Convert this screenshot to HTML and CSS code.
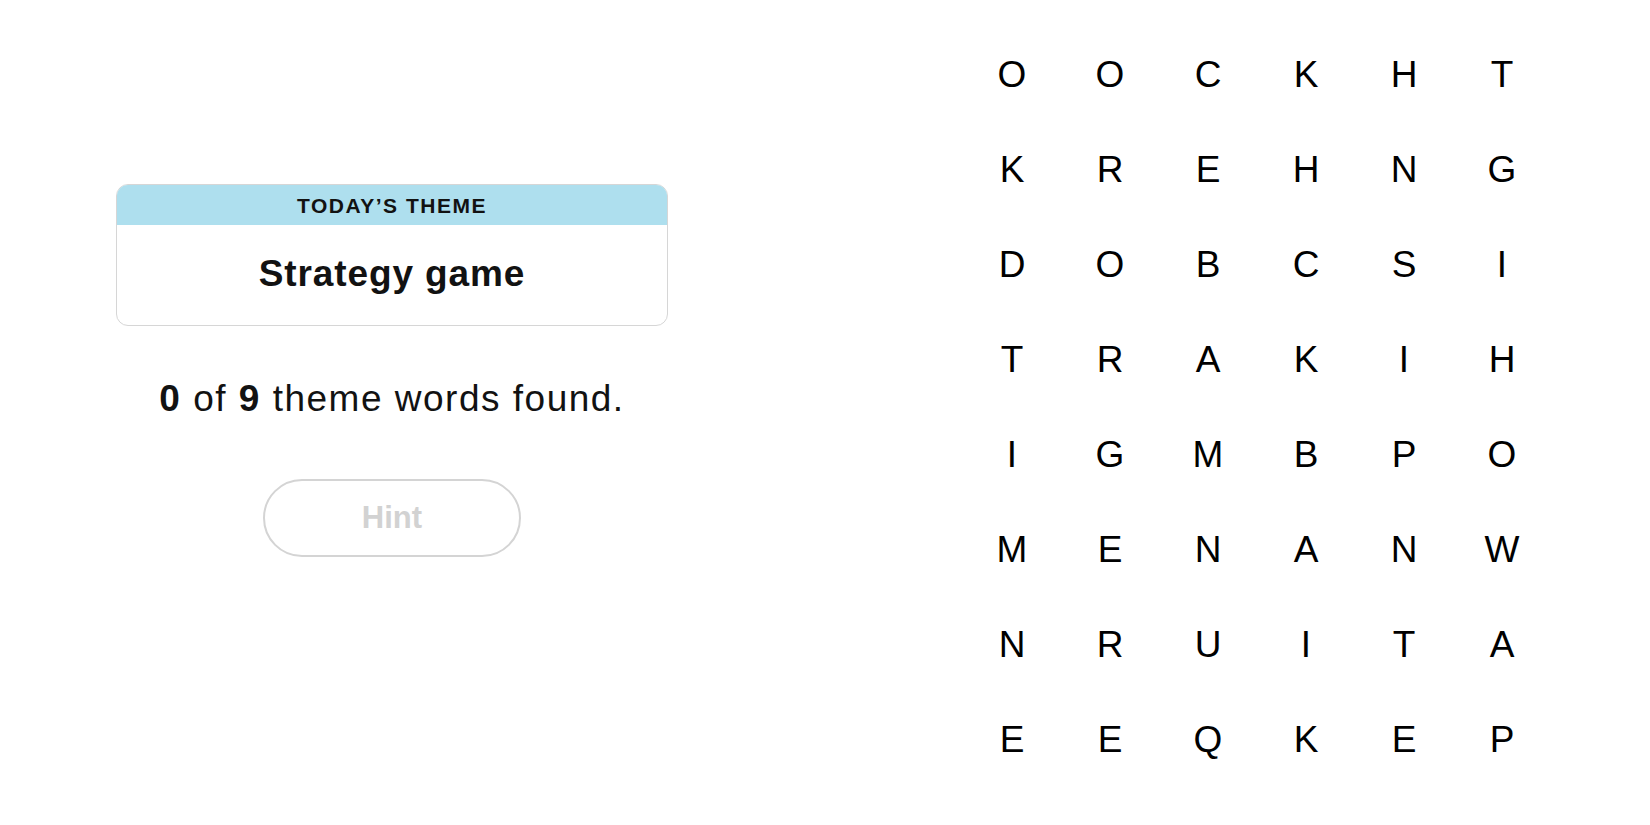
FILE: index.html
```html
<!DOCTYPE html>
<html lang="en">
<head>
<meta charset="utf-8">
<title>Strands</title>
<link rel="stylesheet" href="styles.css">
</head>
<body>
<main class="page">
  <section class="side">
    <div class="theme-card">
      <div class="theme-head">TODAY’S THEME</div>
      <div class="theme-body">Strategy game</div>
    </div>
    <p class="count"><b>0</b> of <b>9</b> theme words found.</p>
    <button class="hint" type="button">Hint</button>
  </section>
  <section class="board">
    <span>O</span><span>O</span><span>C</span><span>K</span><span>H</span><span>T</span>
    <span>K</span><span>R</span><span>E</span><span>H</span><span>N</span><span>G</span>
    <span>D</span><span>O</span><span>B</span><span>C</span><span>S</span><span>I</span>
    <span>T</span><span>R</span><span>A</span><span>K</span><span>I</span><span>H</span>
    <span>I</span><span>G</span><span>M</span><span>B</span><span>P</span><span>O</span>
    <span>M</span><span>E</span><span>N</span><span>A</span><span>N</span><span>W</span>
    <span>N</span><span>R</span><span>U</span><span>I</span><span>T</span><span>A</span>
    <span>E</span><span>E</span><span>Q</span><span>K</span><span>E</span><span>P</span>
  </section>
</main>
</body>
</html>
```

FILE: styles.css
```css
* { box-sizing: border-box; }

html, body {
  margin: 0;
  padding: 0;
  background: #ffffff;
}

body {
  font-family: "Liberation Sans", Arial, sans-serif;
  color: #121212;
}

.page {
  display: flex;
  align-items: flex-start;
  padding-left: 116px;
  height: 825px;
}

.side {
  width: 552px;
  padding-top: 184px;
  display: flex;
  flex-direction: column;
  align-items: center;
}

.theme-card {
  width: 100%;
  border: 1.5px solid #d6d6d6;
  border-radius: 12px;
  overflow: hidden;
}

.theme-head {
  background: #aedfee;
  height: 40px;
  line-height: 42px;
  text-align: center;
  font-size: 21px;
  font-weight: 700;
  letter-spacing: 1.5px;
  color: #121212;
}

.theme-body {
  padding: 31px 0 33px;
  font-size: 37px;
  line-height: 36px;
  font-weight: 700;
  letter-spacing: 0.9px;
  text-align: center;
  color: #121212;
}

.count {
  margin: 53px 0 0;
  font-size: 37px;
  line-height: 40px;
  letter-spacing: 1.5px;
  text-align: center;
  color: #121212;
}

.count b {
  font-weight: 700;
}

.hint {
  margin-top: 60px;
  width: 258px;
  height: 78px;
  border: 2px solid #d4d4d4;
  border-radius: 39px;
  background: #ffffff;
  font-family: "Liberation Sans", Arial, sans-serif;
  font-size: 31px;
  font-weight: 700;
  color: #d2d2d2;
  padding: 0;
}

.board {
  margin-left: 295px;
  padding-top: 27px;
  display: grid;
  grid-template-columns: repeat(6, 98px);
  grid-auto-rows: 95px;
}

.board span {
  display: flex;
  align-items: center;
  justify-content: center;
  font-size: 37px;
  line-height: 1;
  color: #000000;
}
```
